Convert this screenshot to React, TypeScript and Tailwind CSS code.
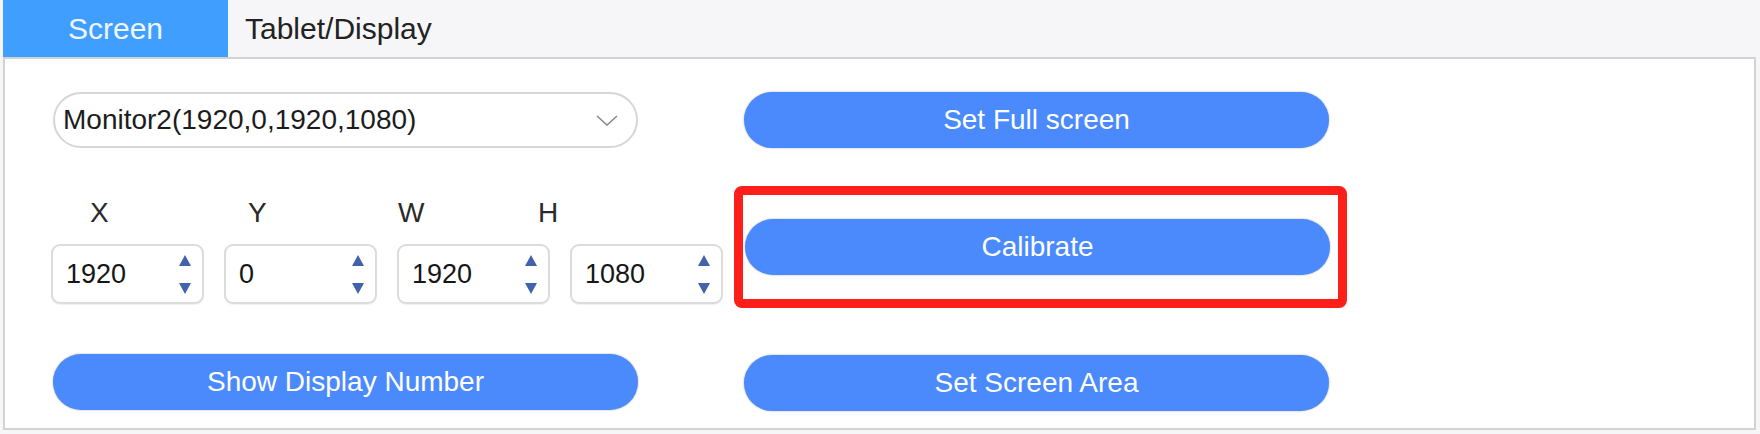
import * as React from "react"

const fields = [
  { label: "X", value: "1920" },
  { label: "Y", value: "0" },
  { label: "W", value: "1920" },
  { label: "H", value: "1080" },
]

function Spinner() {
  return (
    <div className="flex flex-col items-center gap-[17px]">
      <svg width="12" height="11" viewBox="0 0 12 11">
        <polygon points="6,0 12,11 0,11" fill="#4262ac" />
      </svg>
      <svg width="12" height="11" viewBox="0 0 12 11">
        <polygon points="0,0 12,0 6,11" fill="#4262ac" />
      </svg>
    </div>
  )
}

function NumberBox({ value }: { value: string }) {
  return (
    <div className="flex h-[60px] w-[153px] items-center justify-between rounded-[9px] border-2 border-[#dcdcdc] bg-white pl-[13px] pr-[11px] shadow-[0_1px_1px_rgba(0,0,0,0.06)]">
      <span className="text-[27px] text-[#161616]">{value}</span>
      <Spinner />
    </div>
  )
}

function BlueButton({ children, className = "" }: { children: React.ReactNode; className?: string }) {
  return (
    <button
      className={
        "flex h-[56px] w-[585px] items-center justify-center rounded-full bg-[#4a8afd] text-[28px] text-white shadow-[0_0_2px_rgba(0,0,0,0.35)] " +
        className
      }
    >
      {children}
    </button>
  )
}

export default function App() {
  return (
    <div
      className="h-[434px] w-[1760px] overflow-hidden bg-[#f6f6f8]"
      style={{ fontFamily: '"Liberation Sans", Arial, sans-serif' }}
    >
      {/* tabs */}
      <div className="flex h-[57px] pl-[3px]">
        <div className="flex w-[225px] items-center justify-center bg-[#409eff] text-[30px] text-[#eef6ff]">
          Screen
        </div>
        <div className="flex items-center pl-[17px] text-[30px] text-[#222]">Tablet/Display</div>
      </div>

      {/* panel */}
      <div className="ml-[3px] flex h-[373px] w-[1753px] border-2 border-[#d3d3d3] bg-white">
        {/* left column */}
        <div className="flex w-[729px] flex-col pl-[48px] pt-[33px]">
          <div className="flex h-[56px] w-[585px] items-center justify-between rounded-full border-2 border-[#d6d6d6] pl-[8px] pr-[18px]">
            <span className="text-[28px] text-[#1c1c1c]">Monitor2(1920,0,1920,1080)</span>
            <svg width="22" height="11" viewBox="0 0 22 11" fill="none">
              <path d="M1 1l10 9 10-9" stroke="#8a8a8a" strokeWidth="1.6" />
            </svg>
          </div>

          <div className="mt-[49px] flex h-[32px] pl-[37px] text-[28px] leading-[32px] text-[#2a2a2a]">
            <span className="w-[158px]">X</span>
            <span className="w-[150px]">Y</span>
            <span className="w-[140px]">W</span>
            <span>H</span>
          </div>

          <div className="-ml-[2px] mt-[15px] flex gap-[20px]">
            {fields.map((f) => (
              <NumberBox key={f.label} value={f.value} />
            ))}
          </div>

          <BlueButton className="mt-[50px]">Show Display Number</BlueButton>
        </div>

        {/* right column */}
        <div className="flex flex-col pt-[33px]">
          <BlueButton className="ml-[10px]">Set Full screen</BlueButton>

          <div className="mt-[38px] h-[122px] w-[613px] rounded-[8px] border-[9px] border-[#fe1f1b] pl-[2px] pt-[24px]">
            <BlueButton className="w-[584px]">Calibrate</BlueButton>
          </div>

          <BlueButton className="ml-[10px] mt-[47px]">Set Screen Area</BlueButton>
        </div>
      </div>
    </div>
  )
}
